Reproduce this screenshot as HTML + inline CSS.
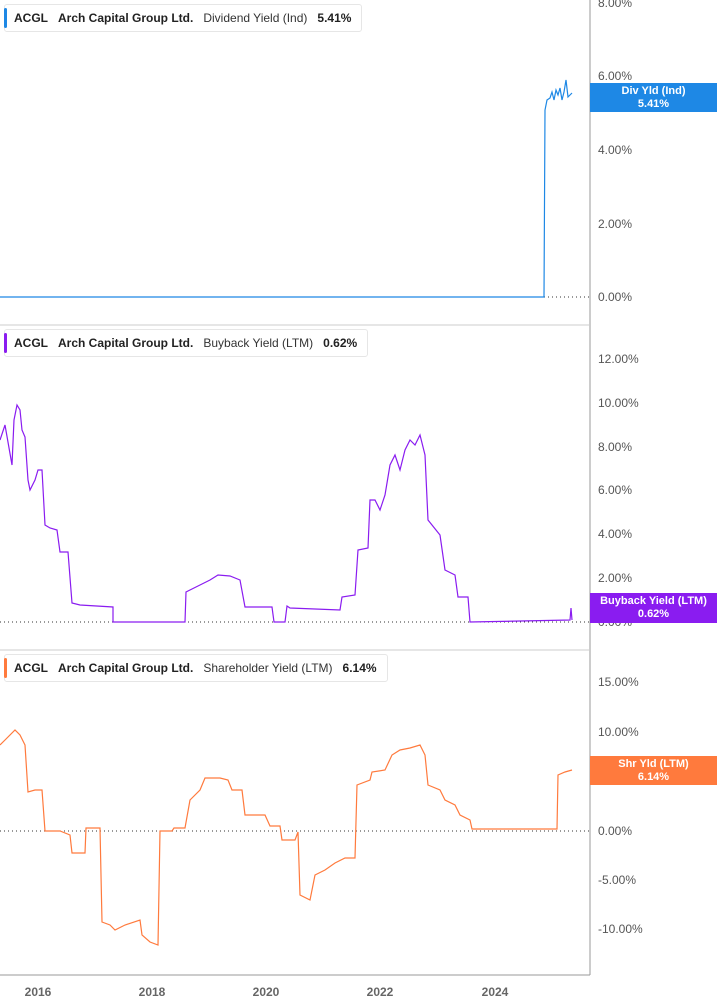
<!DOCTYPE html><html><head><style>
body{margin:0;width:717px;height:1005px;background:#fff;overflow:hidden;font-family:"Liberation Sans",sans-serif;}
.leg{position:absolute;left:4px;height:26px;background:#fff;border:1px solid #e6e6e6;border-radius:3px;font-size:12px;font-weight:bold;color:#222;line-height:26px;padding:0 10px 0 9px;white-space:nowrap}
.leg:before{content:"";position:absolute;left:-1px;top:3px;width:3px;height:20px;border-radius:2px;background:var(--c)}
.leg span{margin-right:10px}.leg .n{font-weight:normal;color:#333}
.tag{position:absolute;left:590px;width:127px;color:#fff;font-size:11px;font-weight:bold;text-align:center;line-height:13px;padding-top:2px}
</style></head><body>
<svg width="717" height="1005" style="position:absolute;left:0;top:0" font-family="Liberation Sans" font-size="12" fill="#555">
<line x1="590" y1="0" x2="590" y2="975" stroke="#999"/>
<line x1="0" y1="325" x2="590" y2="325" stroke="#ccc"/>
<line x1="0" y1="650" x2="590" y2="650" stroke="#ccc"/>
<line x1="0" y1="975" x2="590" y2="975" stroke="#999"/>
<g stroke="#333" stroke-dasharray="1,3"><line x1="0" y1="297" x2="590" y2="297"/><line x1="0" y1="622" x2="590" y2="622"/><line x1="0" y1="831" x2="590" y2="831"/></g>
<g>
<text x="598" y="7">8.00%</text><text x="598" y="80">6.00%</text><text x="598" y="154">4.00%</text><text x="598" y="228">2.00%</text><text x="598" y="301">0.00%</text>
<text x="598" y="363">12.00%</text><text x="598" y="407">10.00%</text><text x="598" y="451">8.00%</text><text x="598" y="494">6.00%</text><text x="598" y="538">4.00%</text><text x="598" y="582">2.00%</text><text x="598" y="626">0.00%</text>
<text x="598" y="686">15.00%</text><text x="598" y="736">10.00%</text><text x="598" y="785">5.00%</text><text x="598" y="835">0.00%</text><text x="598" y="884">-5.00%</text><text x="598" y="933">-10.00%</text>
</g>
<g font-weight="bold" fill="#666" text-anchor="middle"><text x="38" y="996">2016</text><text x="152" y="996">2018</text><text x="266" y="996">2020</text><text x="380" y="996">2022</text><text x="495" y="996">2024</text></g>
<polyline fill="none" stroke="#1e88e5" stroke-width="1.2" points="0,297 544,297 545,110 547,100 550,98 552,92 554,100 556,90 558,95 560,88 562,100 564,92 566,80 568,97 570,95 572,93"/>
<polyline fill="none" stroke="#8a1cf0" stroke-width="1.2" points="0,440 5,425 12,465 14,420 17,405 20,410 22,430 25,437 28,480 30,490 35,480 38,470 42,470 45,525 50,528 57,530 60,552 68,552 72,603 80,605 113,607 113,622 185,622 186,592 200,585 210,580 218,575 230,576 240,580 245,607 272,607 274,622 285,622 287,606 290,608 340,610 342,597 355,595 358,550 368,548 370,500 375,500 380,510 385,495 390,465 395,455 400,470 405,450 410,440 415,445 420,435 425,455 428,520 440,535 445,570 455,575 458,597 468,597 470,622 570,620 571,608 572,620"/>
<polyline fill="none" stroke="#ff7a3d" stroke-width="1.2" points="0,745 5,740 15,730 20,735 25,745 28,792 35,790 42,790 45,831 60,831 70,835 72,853 85,853 86,828 100,828 102,922 110,925 115,930 125,925 140,920 142,935 150,942 158,945 160,831 172,831 174,828 185,828 190,800 200,790 205,778 220,778 228,780 232,790 242,790 245,815 265,815 270,826 280,826 282,840 295,840 298,832 300,895 310,900 315,875 325,870 335,863 345,858 355,858 357,785 370,780 372,772 385,770 392,755 400,750 410,748 420,745 425,755 428,785 440,790 445,800 455,805 460,815 470,820 472,829 557,829 558,775 565,772 572,770"/>
</svg>
<div class="leg" style="top:4px;--c:#1e88e5"><span>ACGL</span><span>Arch Capital Group Ltd.</span><span class="n">Dividend Yield (Ind)</span>5.41%</div>
<div class="leg" style="top:329px;--c:#8a1cf0"><span>ACGL</span><span>Arch Capital Group Ltd.</span><span class="n">Buyback Yield (LTM)</span>0.62%</div>
<div class="leg" style="top:654px;--c:#ff7a3d"><span>ACGL</span><span>Arch Capital Group Ltd.</span><span class="n">Shareholder Yield (LTM)</span>6.14%</div>
<div class="tag" style="top:83px;height:27px;background:#1e88e5">Div Yld (Ind)<br>5.41%</div>
<div class="tag" style="top:593px;height:28px;background:#8a1cf0">Buyback Yield (LTM)<br>0.62%</div>
<div class="tag" style="top:756px;height:27px;background:#ff7a3d">Shr Yld (LTM)<br>6.14%</div>
</body></html>
